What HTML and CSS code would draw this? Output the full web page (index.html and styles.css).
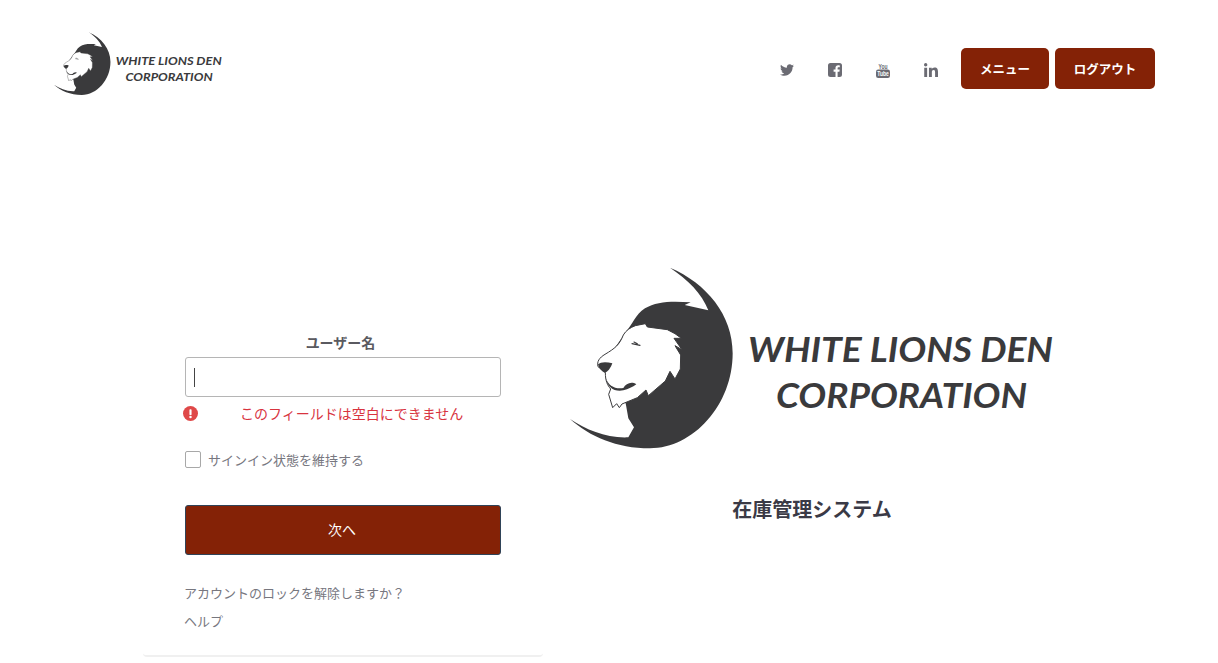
FILE: index.html
```html
<!DOCTYPE html>
<html lang="ja">
<head>
<meta charset="utf-8">
<title>在庫管理システム</title>
<link rel="stylesheet" href="styles.css">
</head>
<body>
<header class="header">
  <svg class="logo-small" viewBox="0 0 484 184" role="img" aria-label="White Lions Den Corporation">
    <defs>
      <g id="brand">
        <g transform="translate(-10,-12) scale(.33333)">
          <path class="lion-dark" d="M330 38C440 85 518 180 518 295C518 450 400 580 270 580C170 580 90 545 30 492C80 525 140 550 205 547L222 517L205 490L198 450L180 380L150 300L195 235C220 205 225 180 255 160C290 138 340 138 392 142L374 150L445 166C425 115 385 75 330 38Z"/>
          <path class="lion-head" d="M226 212L256 206L262 216L322 224L345 236L364 250L342 250L366 284L345 272L362 300L361 342L345 372L330 349L316 378L265 422L258 405L232 428L186 447L178 458L170 446L158 458L146 418L152 402C142 390 136 378 136 352L114 335C110 320 118 308 135 298C165 280 178 270 190 240C198 226 210 218 226 212Z"/>
          <path class="lion-dark" d="M114 328C122 320 140 320 157 325C152 340 142 352 134 353C124 348 116 340 114 328Z"/>
          <path class="lion-dark" d="M137 368C145 392 165 403 190 399C198 386 214 378 229 388C218 396 205 403 190 406C163 411 143 398 137 368Z"/>
          <path class="lion-line" d="M216 266L240 271M222 261L232 266"/>
        </g>
        <text class="brand-text" x="178" y="95" textLength="305" lengthAdjust="spacingAndGlyphs">WHITE LIONS DEN</text>
        <text class="brand-text" x="206" y="141" textLength="251" lengthAdjust="spacingAndGlyphs">CORPORATION</text>
      </g>
    </defs>
    <use href="#brand"/>
  </svg>
  <nav class="nav">
    <a class="social" href="#" aria-label="Twitter">
      <svg class="icon-tw" viewBox="0 0 512 512"><path d="M459.37 151.716c.325 4.548.325 9.097.325 13.645 0 138.72-105.583 298.558-298.558 298.558-59.452 0-114.68-17.219-161.137-47.106 8.447.974 16.568 1.299 25.34 1.299 49.055 0 94.213-16.568 130.274-44.832-46.132-.975-84.792-31.188-98.112-72.772 6.498.974 12.995 1.624 19.818 1.624 9.421 0 18.843-1.3 27.614-3.573-48.081-9.747-84.143-51.98-84.143-102.985v-1.299c13.969 7.797 30.214 12.67 47.431 13.319-28.264-18.843-46.781-51.005-46.781-87.391 0-19.492 5.197-37.36 14.294-52.954 51.655 63.675 129.3 105.258 216.365 109.807-1.624-7.797-2.599-15.918-2.599-24.04 0-57.828 46.782-104.934 104.934-104.934 30.213 0 57.502 12.67 76.67 33.137 23.715-4.548 46.456-13.32 66.599-25.34-7.798 24.366-24.366 44.833-46.132 57.827 21.117-2.273 41.584-8.122 60.426-16.243-14.292 20.791-32.161 39.308-52.628 54.253z"/></svg>
    </a>
    <a class="social" href="#" aria-label="Facebook">
      <svg class="icon-fb" viewBox="0 0 14 14"><path fill-rule="evenodd" d="M2.5 0h9A2.5 2.5 0 0 1 14 2.5v9a2.5 2.5 0 0 1-2.5 2.5H9.6V8.7h1.8l.3-2.1H9.6V5.3c0-.6.2-1 1-1h1.2V2.400c-.3 0-.9-.1-1.600-.1-1.600 0-2.700 1-2.700 2.800v1.500H5.600v2.100h1.900V14h-5A2.500 2.500 0 0 1 0 11.500v-9A2.500 2.500 0 0 1 2.500 0z"/></svg>
    </a>
    <a class="social" href="#" aria-label="YouTube">
      <svg class="icon-yt" viewBox="-5 -4 24 24">
        <text class="yt-you" x="2.500" y="6.500" textLength="9" lengthAdjust="spacingAndGlyphs">You</text>
        <rect class="yt-box" x="0" y="7.500" width="14" height="8.500" rx="2.200"/>
        <text class="yt-tube" x="1.200" y="14.200" textLength="11.600" lengthAdjust="spacingAndGlyphs">Tube</text>
      </svg>
    </a>
    <a class="social" href="#" aria-label="LinkedIn">
      <svg class="icon-in" viewBox="0 0 448 448"><path d="M100.28 448H7.4V148.9h92.88zM53.79 108.1C24.09 108.1 0 83.5 0 53.8a53.79 53.79 0 0 1 107.58 0c0 29.7-24.1 54.3-53.79 54.3zM447.900 448h-92.680V302.400c0-34.700-.7-79.200-48.290-79.200-48.290 0-55.690 37.700-55.690 76.700V448h-92.780V148.900h89.080v40.800h1.300c12.400-23.500 42.690-48.300 87.880-48.300 94 0 111.280 61.900 111.280 142.300V448z"/></svg>
    </a>
    <a class="nav-btn nav-btn-menu" href="#">メニュー</a>
    <a class="nav-btn nav-btn-logout" href="#">ログアウト</a>
  </nav>
</header>
<main class="main">
  <section class="card">
    <div class="label">ユーザー名</div>
    <div class="input"><span class="caret"></span></div>
    <div class="error">
      <svg class="error-icon" viewBox="0 0 14 14"><circle class="error-disc" cx="7" cy="7" r="7"/><rect class="error-mark" x="6" y="3" width="2" height="5.500" rx=".8"/><circle class="error-mark" cx="7" cy="10.300" r="1.150"/></svg>
      <span class="error-text">このフィールドは空白にできません</span>
    </div>
    <label class="remember"><span class="checkbox"></span><span>サインイン状態を維持する</span></label>
    <button class="submit" type="button">次へ</button>
    <a class="link link-first" href="#">アカウントのロックを解除しますか？</a>
    <a class="link link-second" href="#">ヘルプ</a>
  </section>
  <section class="brand">
    <svg class="logo-large" viewBox="0 0 484 184" role="img" aria-label="White Lions Den Corporation"><use href="#brand"/></svg>
    <h1 class="title">在庫管理システム</h1>
  </section>
</main>
</body>
</html>
```
FILE: styles.css
```css
* { box-sizing: border-box; }
html, body { margin: 0; padding: 0; background: #fff; }
body {
  font-family: "Noto Sans CJK JP", "Noto Sans", sans-serif;
  color: #6b6b73;
  overflow: hidden;
}
a { color: inherit; text-decoration: none; }

.header {
  display: flex;
  justify-content: space-between;
  align-items: flex-start;
  padding: 32px 63px 0 54px;
}
.logo-small { display: block; width: 168px; height: 64px; }
.lion-dark { fill: #3a3a3c; }
.lion-head { fill: #fff; stroke: #3a3a3c; stroke-width: 3; }
.lion-line { fill: none; stroke: #3a3a3c; stroke-width: 3.500; stroke-linecap: round; }
.brand-text {
  font-family: Lato, "Open Sans", sans-serif;
  font-style: italic;
  font-weight: 700;
  font-size: 35px;
  fill: #3a3a3c;
}

.nav { display: flex; align-items: center; margin-top: 16px; }
.social {
  display: flex;
  justify-content: center;
  align-items: center;
  width: 48px;
  height: 41px;
  padding-top: 3px;
  fill: #6b6b73;
}
.icon-tw { width: 14px; height: 14px; }
.icon-fb { width: 14px; height: 14px; }
.icon-yt { width: 24px; height: 24px; }
.icon-in { width: 14px; height: 14px; }
.yt-you { font: 700 8px "Liberation Sans", sans-serif; fill: #6b6b73; }
.yt-box { fill: #6b6b73; }
.yt-tube { font: 700 6.500px "Liberation Sans", sans-serif; fill: #fff; }

.nav-btn {
  display: flex;
  justify-content: center;
  align-items: center;
  height: 41px;
  border-radius: 5px;
  background: #842206;
  color: #fff;
  font-size: 12.500px;
  font-weight: 700;
}
.nav-btn-menu { width: 88px; margin-left: 6px; }
.nav-btn-logout { width: 100px; margin-left: 6px; }

.main {
  display: flex;
  align-items: flex-start;
  padding: 171px 0 0 143px;
}
.card {
  width: 400px;
  margin-top: 65px;
  padding: 0 42px 24px;
  border-bottom: 2px solid #f0f0f0;
  border-radius: 0 0 4px 4px;
}
.label {
  height: 20px;
  line-height: 20px;
  padding-right: 5px;
  text-align: center;
  font-size: 14px;
  font-weight: 700;
  color: #5a5a60;
}
.input {
  display: flex;
  align-items: center;
  height: 40px;
  margin-top: 5px;
  padding-left: 8px;
  border: 1px solid #b5b5b5;
  border-radius: 3px;
}
.caret { display: block; width: 1px; height: 19px; background: #444; }
.error {
  display: flex;
  align-items: center;
  height: 20px;
  margin: 6px 0 0 -2px;
  font-size: 14px;
  color: #d8343f;
}
.error-icon { width: 15px; height: 15px; flex: none; }
.error-disc { fill: #df4848; }
.error-mark { fill: #fff; }
.error-text { margin-left: 42px; line-height: 20px; }
.remember {
  display: flex;
  align-items: center;
  height: 17px;
  margin-top: 28px;
  font-size: 13px;
  color: #77777f;
}
.checkbox {
  display: block;
  width: 16px;
  height: 17px;
  margin-right: 7px;
  border: 1px solid #a8a8a8;
  border-radius: 2px;
}
.submit {
  display: block;
  width: 100%;
  height: 50px;
  margin-top: 37px;
  padding: 0 2px 3px 0;
  border: 1px solid #2f4358;
  border-radius: 3px;
  background: #842206;
  color: #fff;
  font: 400 14px "Noto Sans CJK JP", sans-serif;
}
.link {
  display: block;
  height: 20px;
  line-height: 20px;
  margin-left: -1px;
  font-size: 13px;
  color: #77777f;
}
.link-first { margin-top: 28px; }
.link-second { margin-top: 8px; }

.brand { display: flex; flex-direction: column; align-items: center; width: 484px; margin-left: 27px; }
.logo-large { display: block; width: 484px; height: 184px; }
.title {
  margin: 44px 0 0;
  height: 28px;
  line-height: 28px;
  font-size: 20px;
  font-weight: 700;
  color: #3a3a46;
}
```
